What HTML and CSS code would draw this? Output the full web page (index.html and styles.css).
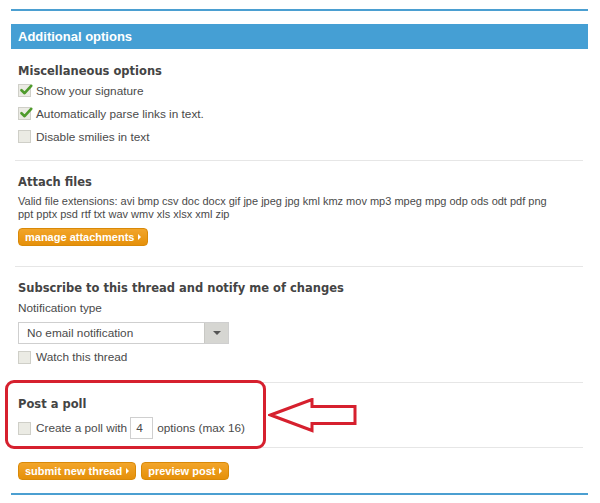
FILE: index.html
```html
<!DOCTYPE html>
<html>
<head>
<meta charset="utf-8">
<link rel="stylesheet" href="styles.css">
</head>
<body>
<div class="page">
  <div class="rule"></div>
  <div class="panel-head">Additional options</div>

  <div class="section misc">
    <h3>Miscellaneous options</h3>
    <div class="check"><span class="box on"><svg viewBox="0 0 14 14" width="14" height="14"><path d="M2.5 7.2 L5.6 10.2 L12.2 2.8" fill="none" stroke="#4f9b2c" stroke-width="2.6" stroke-linecap="round" stroke-linejoin="round"/></svg></span>Show your signature</div>
    <div class="check"><span class="box on"><svg viewBox="0 0 14 14" width="14" height="14"><path d="M2.5 7.2 L5.6 10.2 L12.2 2.8" fill="none" stroke="#4f9b2c" stroke-width="2.6" stroke-linecap="round" stroke-linejoin="round"/></svg></span>Automatically parse links in text.</div>
    <div class="check"><span class="box"></span>Disable smilies in text</div>
  </div>

  <div class="section attach">
    <h3>Attach files</h3>
    <p class="exts">Valid file extensions: avi bmp csv doc docx gif jpe jpeg jpg kml kmz mov mp3 mpeg mpg odp ods odt pdf png ppt pptx psd rtf txt wav wmv xls xlsx xml zip</p>
    <span class="btn">manage attachments<span class="tri"></span></span>
  </div>

  <div class="section subscribe">
    <h3>Subscribe to this thread and notify me of changes</h3>
    <div class="label">Notification type</div>
    <div class="select"><span class="sel-text">No email notification</span><span class="sel-arrow"><span class="down"></span></span></div>
    <div class="check watch"><span class="box"></span>Watch this thread</div>
  </div>

  <div class="section poll">
    <h3>Post a poll</h3>
    <div class="check pollrow"><span class="box"></span>Create a poll with <span class="num">4</span> options (max 16)</div>
  </div>

  <div class="actions">
    <span class="btn">submit new thread<span class="tri"></span></span>
    <span class="btn">preview post<span class="tri"></span></span>
  </div>

  <div class="rule bottom"></div>

  <div class="highlight"></div>
  <svg class="arrow" width="92" height="40" viewBox="0 0 92 40">
    <path d="M2.5 17 L44 1.5 L44 8.5 L87 8.5 L87 25.5 L44 25.5 L44 32.5 Z" fill="none" stroke="#d6202e" stroke-width="3" stroke-linejoin="miter"/>
  </svg>
</div>
</body>
</html>
```

FILE: styles.css
```css
html, body {
  margin: 0;
  padding: 0;
  background: #ffffff;
}

.page {
  position: relative;
  margin: 0 12px 0 11px;
  padding-top: 9px;
  font-family: "Liberation Sans", Arial, sans-serif;
  font-size: 11.8px;
  color: #4a4a4a;
}

.rule {
  height: 2px;
  background: #4b9fd1;
}

.rule.bottom {
  margin-top: 13px;
}

.panel-head {
  margin-top: 13px;
  height: 25px;
  line-height: 25px;
  background: #459fd4;
  color: #ffffff;
  font-weight: bold;
  font-size: 13px;
  padding-left: 7px;
}

.section {
  margin: 0 5px 0 4px;
  padding-left: 3px;
  border-bottom: 1px solid #e6e6e6;
}

h3 {
  margin: 0;
  font-family: "DejaVu Sans", Verdana, sans-serif;
  font-size: 11.5px;
  line-height: 16px;
  font-weight: bold;
  color: #444444;
}

.misc {
  padding-top: 14px;
  padding-bottom: 12px;
}

.check {
  display: flex;
  align-items: center;
  height: 23px;
  white-space: nowrap;
}

.box {
  position: relative;
  flex: none;
  width: 11px;
  height: 11px;
  border: 1px solid #cfcfc8;
  background: #ebebe4;
  margin-right: 5px;
}

.box svg {
  position: absolute;
  left: 0;
  top: -2px;
}

.attach {
  padding-top: 13px;
  padding-bottom: 20px;
}

.exts {
  margin: 5px 0 0 0;
  font-size: 11px;
  line-height: 13px;
  padding-right: 20px;
}

.btn {
  display: inline-flex;
  align-items: center;
  height: 18px;
  box-sizing: border-box;
  padding: 0 6px 0 6px;
  border: 1px solid #d98908;
  border-radius: 4px;
  background: linear-gradient(#f2a52a, #e5900a);
  color: #ffffff;
  font-weight: bold;
  font-size: 11px;
}

.attach .btn {
  margin-top: 7px;
}

.tri {
  display: inline-block;
  width: 0;
  height: 0;
  margin-left: 4px;
  border-top: 3px solid transparent;
  border-bottom: 3px solid transparent;
  border-left: 3px solid #ffffff;
}

.subscribe {
  padding-top: 13px;
  padding-bottom: 15px;
}

.label {
  margin-top: 4px;
  line-height: 16px;
}

.select {
  display: flex;
  margin-top: 6px;
  width: 211px;
  height: 22px;
  box-sizing: border-box;
  border: 1px solid #cfcfcf;
  background: #ffffff;
}

.sel-text {
  flex: 1;
  line-height: 20px;
  padding-left: 8px;
}

.sel-arrow {
  display: flex;
  align-items: center;
  justify-content: center;
  width: 23px;
  background: #d6d6d2;
  border-left: 1px solid #c8c8c4;
}

.down {
  width: 0;
  height: 0;
  border-left: 4px solid transparent;
  border-right: 4px solid transparent;
  border-top: 4px solid #555555;
}

.watch {
  margin-top: 3px;
  height: 20px;
}

.poll {
  padding-top: 13px;
  padding-bottom: 8px;
}

.pollrow {
  margin-top: 5px;
  height: 22px;
}

.num {
  display: inline-block;
  width: 23px;
  height: 22px;
  box-sizing: border-box;
  border: 1px solid #cfcfcf;
  line-height: 20px;
  padding-left: 5px;
  margin: 0 4px 0 3px;
}

.actions {
  display: flex;
  gap: 5px;
  margin-top: 14px;
  padding-left: 7px;
}

.highlight {
  position: absolute;
  left: -6px;
  top: 380px;
  width: 255px;
  height: 63px;
  border: 3px solid #d6202e;
  border-radius: 9px;
}

.arrow {
  position: absolute;
  left: 257px;
  top: 398px;
}
```
